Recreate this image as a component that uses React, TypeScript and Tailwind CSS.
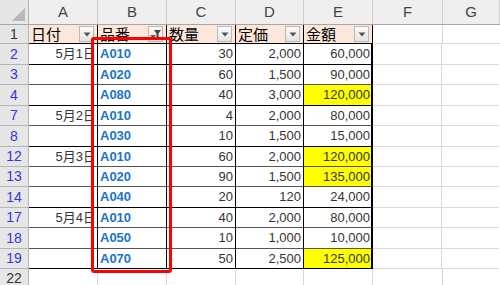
import React from "react";

const W = ["w-[29px]", "w-[69px]", "w-[69px]", "w-[69px]", "w-[68px]", "w-[69px]", "w-[70px]", "w-[57px]"];
const rows = [
  { n: "2", h: "h-[21px]", a: "5月1日", b: "A010", c: "30", d: "2,000", e: "60,000", y: false, k: true },
  { n: "3", h: "h-[20px]", a: "", b: "A020", c: "60", d: "1,500", e: "90,000", y: false, k: false },
  { n: "4", h: "h-[21px]", a: "", b: "A080", c: "40", d: "3,000", e: "120,000", y: true, k: true },
  { n: "7", h: "h-[20px]", a: "5月2日", b: "A010", c: "4", d: "2,000", e: "80,000", y: false, k: false },
  { n: "8", h: "h-[21px]", a: "", b: "A030", c: "10", d: "1,500", e: "15,000", y: false, k: true },
  { n: "12", h: "h-[20px]", a: "5月3日", b: "A010", c: "60", d: "2,000", e: "120,000", y: true, k: false },
  { n: "13", h: "h-[20px]", a: "", b: "A020", c: "90", d: "1,500", e: "135,000", y: true, k: false },
  { n: "14", h: "h-[21px]", a: "", b: "A040", c: "20", d: "120", e: "24,000", y: false, k: true },
  { n: "17", h: "h-[20px]", a: "5月4日", b: "A010", c: "40", d: "2,000", e: "80,000", y: false, k: false },
  { n: "18", h: "h-[21px]", a: "", b: "A050", c: "10", d: "1,000", e: "10,000", y: false, k: false },
  { n: "19", h: "h-[20px]", a: "", b: "A070", c: "50", d: "2,500", e: "125,000", y: true, k: true },
];

function DropBtn({ filter }: { filter?: boolean }) {
  return (
    <div className="absolute right-[3px] top-[1px] w-[15px] h-[16px] border border-[#b9b9b9] bg-gradient-to-b from-[#fbfbfb] to-[#e4e4e4] flex items-center justify-center">
      {filter ? (
        <svg width="11" height="9" viewBox="0 0 11 9">
          <path d="M0 5 L3 8 L6 5 Z" fill="#555" />
          <path d="M4 0 H11 L8.5 3.5 V8 L6.5 7 V3.5 Z" fill="#444" />
        </svg>
      ) : (
        <svg width="8" height="5" viewBox="0 0 8 5">
          <path d="M0.5 0.5 H7.5 L4 4.5 Z" fill="#555" />
        </svg>
      )}
    </div>
  );
}

const rowHead = "h-full flex items-center justify-center bg-[#e6e6e6] border-r border-b border-[#b5b5b5] text-[14px]";
const num = "h-full flex items-center justify-end text-[13px] text-[#333] border-b border-r border-r-black";

export default function App() {
  return (
    <div className="w-[500px] h-[285px] overflow-hidden relative bg-white font-['Liberation_Sans','Noto_Sans_CJK_JP',sans-serif]">
      {/* column header row */}
      <div className="flex h-[25px] border-b border-[#a6a6a6]">
        <div className={`${W[0]} relative bg-[#e6e6e6] border-r border-[#b5b5b5]`}>
          <svg className="absolute right-[3px] bottom-[3px]" width="13" height="13" viewBox="0 0 13 13">
            <path d="M13 0 V13 H0 Z" fill="#b7b7b7" />
          </svg>
        </div>
        {["A", "B", "C", "D", "E", "F", "G"].map((l, i) => (
          <div key={l} className={`${W[i + 1]} h-full flex items-center justify-center text-[15px] text-[#444] bg-[#efefef] border-r border-[#cdcdcd]`}>
            {l}
          </div>
        ))}
      </div>
      {/* row 1 */}
      <div className="flex h-[19px]">
        <div className={`${W[0]} ${rowHead} text-[#333]`}>1</div>
        {["日付", "品番", "数量", "定価", "金額"].map((t, i) => (
          <div
            key={t}
            className={`${W[i + 1]} relative h-full bg-[#fce7da] border-r border-b border-black flex items-center pl-[2px] text-[15px] text-black`}
          >
            <span className="leading-none">{t}</span>
            <DropBtn filter={i === 1} />
          </div>
        ))}
        <div className={`${W[6]} h-full border-r border-b border-[#d9d9d9]`} />
        <div className={`${W[7]} h-full border-b border-[#d9d9d9]`} />
      </div>
      {/* data rows */}
      {rows.map((r) => {
        const bb = r.k ? "border-b-black" : "border-b-[#555]";
        return (
          <div key={r.n} className={`flex ${r.h}`}>
            <div className={`${W[0]} ${rowHead} text-[#3434e0]`}>{r.n}</div>
            <div className={`${W[1]} ${num} ${bb} pr-[1px] whitespace-nowrap overflow-hidden`}>{r.a}</div>
            <div className={`${W[2]} h-full border-b ${bb} border-r border-r-black flex items-center pl-[2px] text-[13px] font-bold text-[#1a74c9]`}>
              {r.b}
            </div>
            <div className={`${W[3]} ${num} ${bb} pr-[2px]`}>{r.c}</div>
            <div className={`${W[4]} ${num} ${bb} pr-[2px]`}>{r.d}</div>
            <div className={`${W[5]} ${num} ${bb} border-r-2 pr-[1px] ${r.y ? "bg-[#ffff00]" : ""}`}>{r.e}</div>
            <div className="w-[69px] h-full border-r border-b border-[#d9d9d9]" />
            <div className={`${W[7]} h-full border-b border-[#d9d9d9]`} />
          </div>
        );
      })}
      {/* row 22 */}
      <div className="flex h-[20px]">
        <div className={`${W[0]} ${rowHead} text-[#333]`}>22</div>
        {[1, 2, 3, 4, 5, 6].map((i) => (
          <div key={i} className={`${W[i]} h-full border-r border-b border-[#d9d9d9]`} />
        ))}
      </div>
      {/* red highlight */}
      <div className="absolute left-[91px] top-[37px] w-[81px] h-[236px] border-[3px] border-[#ff0000] rounded-[3px]" />
    </div>
  );
}
